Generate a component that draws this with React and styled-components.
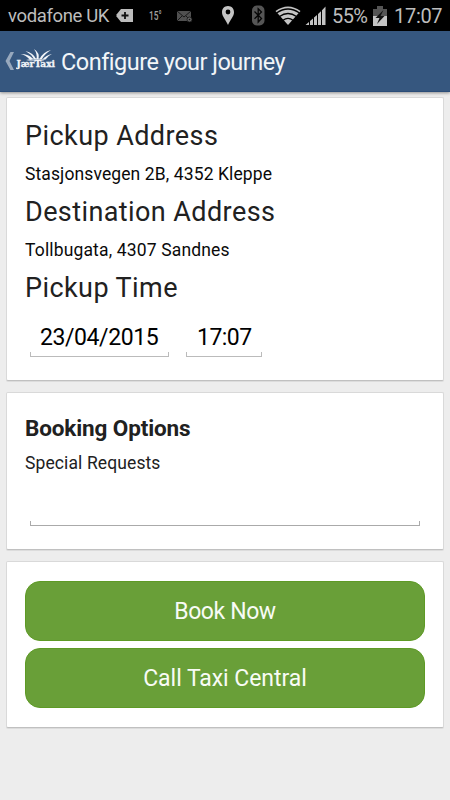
import React from "react";
import styled, { createGlobalStyle } from "styled-components";

const Global = createGlobalStyle`
  * { box-sizing: border-box; }
  html, body { margin: 0; padding: 0; background: #ededed; }
  body { font-family: Roboto, "Liberation Sans", sans-serif; color: #000; }
`;

const Screen = styled.div`
  width: 450px;
  height: 800px;
  overflow: hidden;
  display: flex;
  flex-direction: column;
  background: #ededed;
`;

const StatusBar = styled.div`
  height: 31px;
  flex: none;
  display: flex;
  align-items: center;
  background: #000;
  color: #bdbdbd;
  padding-left: 8px;
  white-space: nowrap;
`;

const StatusText = styled.span`
  flex: none;
  width: ${(p) => p.$width}px;
  margin-left: ${(p) => p.$gap || 0}px;
  font-size: ${(p) => p.$size}px;
  letter-spacing: ${(p) => p.$spacing || 0}px;
  line-height: 31px;
  padding-top: 1px;
`;

const Temperature = styled.span`
  flex: none;
  width: 12px;
  margin-left: 15px;
  font-size: 13px;
  font-weight: 500;
  line-height: 31px;
  color: #a0a0a0;
  transform: scaleX(0.64);
  transform-origin: left;
`;

const StatusIcon = styled.svg`
  flex: none;
  display: block;
  margin-left: ${(p) => p.$gap}px;
`;

const Header = styled.header`
  height: 61px;
  flex: none;
  display: flex;
  align-items: center;
  padding-left: 5px;
  background: #36577f;
  border-bottom: 1px solid #2b4d78;
  box-shadow: 0 1px 3px rgba(0, 0, 0, 0.4);
`;

const Back = styled.svg`
  flex: none;
  display: block;
`;

const Logo = styled.svg`
  flex: none;
  display: block;
  margin: 0 0 3px 1px;
`;

const Title = styled.h1`
  margin: 0 0 0 4px;
  font-size: 23.5px;
  font-weight: 400;
  line-height: 60px;
  padding-top: 1px;
  letter-spacing: ${(p) => p.$spacing}px;
  color: #f2f5f8;
  white-space: nowrap;
`;

const Content = styled.main`
  display: flex;
  flex-direction: column;
  gap: 11px;
  padding: 5px 6px 0;
`;

const Card = styled.section`
  height: ${(p) => p.$height}px;
  display: flex;
  flex-direction: column;
  padding: ${(p) => p.$top}px 18px 0;
  background: #fff;
  border: 1px solid #d9d9d9;
  border-bottom-color: #c0c0c0;
  border-radius: 2px;
  box-shadow: 0 1px 0 rgba(0, 0, 0, 0.07);
`;

const Heading = styled.h2`
  margin: 0;
  height: 40px;
  line-height: 41px;
  font-size: 27px;
  font-weight: 400;
  letter-spacing: ${(p) => p.$spacing}px;
  color: #212121;
`;

const Address = styled.p`
  margin: 0;
  height: 36px;
  line-height: 36px;
  font-size: 17.5px;
  letter-spacing: ${(p) => p.$spacing}px;
  color: #0a0a0a;
`;

const Fields = styled.div`
  display: flex;
  gap: 17px;
  padding-left: 5px;
  margin-top: 7px;
`;

const Field = styled.div`
  width: ${(p) => p.$width}px;
  height: 42px;
  display: flex;
  flex-direction: column;
  justify-content: flex-end;
`;

const FieldValue = styled.span`
  padding-left: ${(p) => p.$inset}px;
  height: 32px;
  line-height: 36px;
  font-size: 23px;
  letter-spacing: ${(p) => p.$spacing}px;
  white-space: nowrap;
`;

const Underline = styled.div`
  height: 5px;
  border: 1px solid ${(p) => p.$color || "#bbb"};
  border-top: 0;
`;

const SectionTitle = styled.h3`
  margin: 0;
  height: 34px;
  line-height: 34px;
  font-size: 22.5px;
  font-weight: 700;
  letter-spacing: ${(p) => p.$spacing}px;
  color: #212121;
`;

const Label = styled.label`
  height: 36px;
  line-height: 36px;
  font-size: 17.5px;
  letter-spacing: ${(p) => p.$spacing}px;
  color: #212121;
`;

const RequestInput = styled.div`
  width: 390px;
  height: 45px;
  margin-left: 5px;
  display: flex;
  flex-direction: column;
  justify-content: flex-end;
`;

const Buttons = styled.div`
  display: flex;
  flex-direction: column;
  gap: 7.6px;
`;

const Button = styled.button`
  height: 59.7px;
  padding: 1px 0 0;
  border: 1px solid #5e9a25;
  border-radius: 15px;
  background: #699f38;
  color: #f8fbf5;
  font-family: inherit;
  font-size: 23px;
  letter-spacing: ${(p) => p.$spacing}px;
`;

const JaerTaxiLogo = () => (
  <Logo width="41" height="21" viewBox="0 0 41 21" fill="#f1f4f8">
    <path d="M14 11Q10 6 4.5 5Q13 5 17 10Z" />
    <path d="M18 10Q15 5 9.5 2Q17.5 4 20 10Z" />
    <path d="M20.5 10Q21.5 5 18 0Q24 4 22.5 10Z" />
    <path d="M23.5 10Q27 3 35 1Q28.5 5 26 10Z" />
    <path d="M26.5 10.5Q30 6 36 5Q31.5 7 29.5 10.5Z" />
    <path d="M10 11Q18 7.5 29 10.5L27 12H13Z" opacity=".55" />
    <text x="0.5" y="17.8" textLength="38.5" lengthAdjust="spacingAndGlyphs" fontFamily="DejaVu Serif, serif" fontWeight="700" fontSize="9.5" stroke="#f1f4f8" strokeWidth=".3">JærTaxi</text>
  </Logo>
);

export default function App() {
  return (
    <>
      <Global />
      <Screen>
        <StatusBar>
          <StatusText $width={101} $size={18.5} $spacing={-0.37}>vodafone UK</StatusText>
          <StatusIcon $gap={7} width="18" height="15" viewBox="0 0 18 15">
            <path d="M5 1H17V14H5L0.5 8.5V6.5Z" fill="#bdbdbd" />
            <path d="M9 4V11M5.5 7.5H12.5" stroke="#101010" strokeWidth="1.8" />
          </StatusIcon>
          <Temperature>15°</Temperature>
          <StatusIcon $gap={16} width="16" height="14" viewBox="0 0 16 14">
            <path d="M0 2H14V12H0Z" fill="#505050" />
            <path d="M0 2L7 8L14 2M0 12L5 7M14 12L9 7" stroke="#171717" fill="none" />
            <circle cx="12.5" cy="10.5" r="2.5" fill="#606060" stroke="#111" strokeWidth=".7" />
            <circle cx="12.5" cy="10.5" r=".8" fill="#111" />
          </StatusIcon>
          <StatusIcon $gap={28} width="14" height="21" viewBox="0 0 14 21">
            <path d="M7 1C3.2 1 1 3.8 1 7.3C1 11.3 4.5 14.5 7 20C9.5 14.5 13 11.3 13 7.3C13 3.8 10.8 1 7 1Z" fill="#c4c4c4" />
            <circle cx="7" cy="7" r="2.4" fill="#000" />
          </StatusIcon>
          <StatusIcon $gap={16} width="14" height="21" viewBox="0 0 14 21">
            <rect x="1" y="0.5" width="12.5" height="20" rx="5" fill="#555" />
            <path d="M3.5 6.5L10.5 13.5L7.2 17V3.8L10.5 7L3.5 13.8" fill="none" stroke="#050505" strokeWidth="1.3" />
          </StatusIcon>
          <StatusIcon $gap={10} width="26" height="20" viewBox="0 0 26 20">
            <path d="M13 19L0.5 5Q13-4 25.5 5Z" fill="#c4c4c4" />
            <path d="M1.5 7Q13-1 24.5 7M4.5 10.5Q13 4.5 21.5 10.5M8 14.2Q13 10.5 18 14.2" fill="none" stroke="#000" strokeWidth="1.3" />
          </StatusIcon>
          <StatusIcon $gap={4} width="21" height="20" viewBox="0 0 21 20">
            <path d="M0.5 19L4 16V19ZM5 15L8 12.5V19H5ZM9 11.5L12 9V19H9ZM13 8L16 5.2V19H13ZM17 4.2L20.5 0.5V19H17Z" fill="#c4c4c4" />
          </StatusIcon>
          <StatusText $gap={6} $width={36} $size={20} $spacing={-0.6}>55%</StatusText>
          <StatusIcon $gap={5} width="14" height="20" viewBox="0 0 14 20">
            <path d="M0 3H4V0H10V3H14V10H0Z" fill="#555" />
            <path d="M0 10H14V20H0Z" fill="#c4c4c4" />
            <path d="M10.5 4L2.5 12H6.5L4 18L11.5 10H7.5Z" fill="#111" />
          </StatusIcon>
          <StatusText $gap={7} $width={50} $size={20} $spacing={-0.3}>17:07</StatusText>
        </StatusBar>
        <Header>
          <Back width="10" height="20" viewBox="0 0 10 20">
            <path d="M5.5 1H9L4.5 10L9 19H5.5L0.5 10Z" fill="#97a8bd" />
          </Back>
          <JaerTaxiLogo />
          <Title $spacing={-0.5}>Configure your journey</Title>
        </Header>
        <Content>
          <Card $height={284} $top={18}>
            <Heading $spacing={0.43}>Pickup Address</Heading>
            <Address $spacing={0.11}>Stasjonsvegen 2B, 4352 Kleppe</Address>
            <Heading $spacing={0.41}>Destination Address</Heading>
            <Address $spacing={0.15}>Tollbugata, 4307 Sandnes</Address>
            <Heading $spacing={0.42}>Pickup Time</Heading>
            <Fields>
              <Field $width={139}>
                <FieldValue $inset={10} $spacing={-0.42}>23/04/2015</FieldValue>
                <Underline />
              </Field>
              <Field $width={76}>
                <FieldValue $inset={11} $spacing={-0.55}>17:07</FieldValue>
                <Underline />
              </Field>
            </Fields>
          </Card>
          <Card $height={158} $top={18}>
            <SectionTitle $spacing={-0.13}>Booking Options</SectionTitle>
            <Label $spacing={0.11}>Special Requests</Label>
            <RequestInput>
              <Underline $color="#aaa" />
            </RequestInput>
          </Card>
          <Card $height={167} $top={19}>
            <Buttons>
              <Button $spacing={-0.4}>Book Now</Button>
              <Button $spacing={-0.05}>Call Taxi Central</Button>
            </Buttons>
          </Card>
        </Content>
      </Screen>
    </>
  );
}
